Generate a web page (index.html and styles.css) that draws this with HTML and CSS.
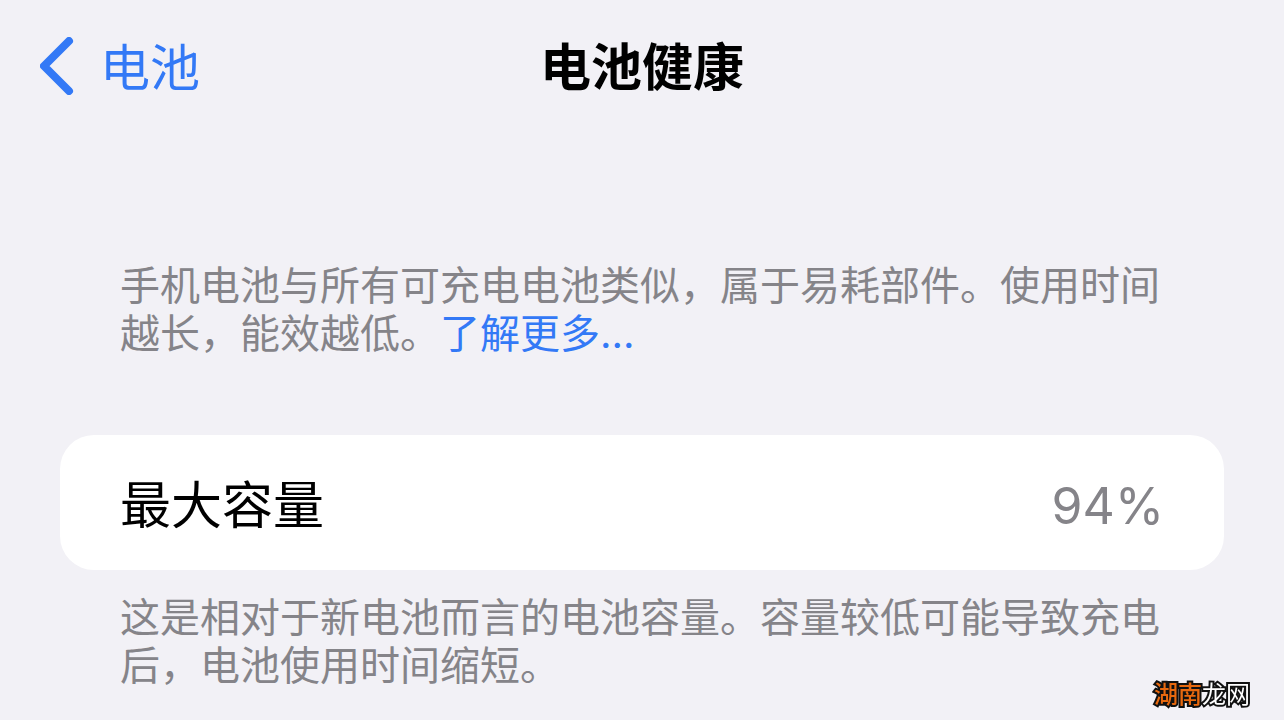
FILE: index.html
```html
<!DOCTYPE html>
<html lang="zh-CN">
<head>
  <meta charset="UTF-8" />
  <meta name="viewport" content="width=device-width, initial-scale=1.0" />
  <title>电池健康</title>
  <link rel="stylesheet" href="styles.css">
</head>
<body>

<header class="navbar">
  <a class="back" href="#">
    <svg class="chevron" viewBox="0 0 34 58" aria-hidden="true">
      <path d="M29 4 L4 29 L29 54" />
    </svg>
    <span class="label">电池</span>
  </a>
  <h1 class="label">电池健康</h1>
</header>

<main>
  <p class="note intro">手机电池与所有可充电电池类似，属于易耗部件。使用时间越长，能效越低。<a href="#">了解更多...</a></p>

  <div class="card">
    <span>最大容量</span>
    <span class="value">94%</span>
  </div>

  <p class="note">这是相对于新电池而言的电池容量。容量较低可能导致充电后，电池使用时间缩短。</p>
</main>

<div class="watermark"><span>湖南</span>龙网</div>

</body>
</html>
```

FILE: styles.css
```css
* {
  box-sizing: border-box;
}
body {
  margin: 0;
  font-family: Inter, "Noto Sans CJK SC", sans-serif;
  background: #f2f1f6;
  color: #000;
}
a {
  color: #3379f6;
  text-decoration: none;
}
.navbar {
  display: grid;
  grid-template-columns: 1fr auto 1fr;
  align-items: center;
  height: 132px;
  padding: 0 40px;
}
.back {
  display: flex;
  align-items: center;
  gap: 26px;
  font-size: 50px;
}
.chevron {
  width: 34px;
  height: 58px;
  fill: none;
  stroke: #3379f6;
  stroke-width: 8;
  stroke-linecap: round;
  stroke-linejoin: round;
}
h1 {
  margin: 0;
  font-size: 51px;
  font-weight: 700;
}
.label {
  padding-bottom: 4px;
}
main {
  padding: 0 60px;
}
.note {
  margin: 0;
  padding: 0 56px 0 60px;
  font-size: 40px;
  line-height: 48px;
  color: #858489;
}
.intro {
  margin-top: 130px;
}
.card {
  display: flex;
  justify-content: space-between;
  align-items: baseline;
  margin: 77px 0 24px;
  padding: 35px 60px 28px;
  border-radius: 34px;
  background: #fff;
  font-size: 51px;
  line-height: 71px;
}
.value {
  font-size: 50px;
  color: #858489;
}
.watermark {
  position: fixed;
  right: 34px;
  bottom: 10px;
  font-size: 24px;
  color: #fff;
  -webkit-text-stroke: 4px #111;
  paint-order: stroke fill;
}
.watermark span {
  color: #e8690f;
  font-weight: 500;
}
```
